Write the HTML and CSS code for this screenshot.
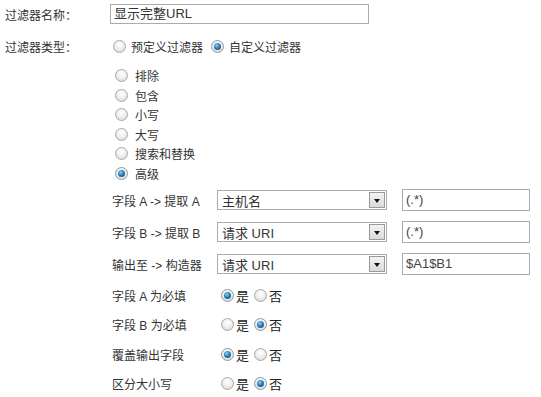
FILE: index.html
```html
<!DOCTYPE html>
<html lang="zh-CN">
<head>
<meta charset="utf-8">
<title>过滤器</title>
<link rel="stylesheet" href="styles.css">
</head>
<body>
<div class="form">
  <div class="row top">
    <div class="lbl">过滤器名称：</div>
    <div class="textbox name">显示完整URL</div>
  </div>
  <div class="row type">
    <div class="lbl">过滤器类型：</div>
    <div class="choices">
      <span class="opt"><span class="radio"></span><span class="t">预定义过滤器</span></span>
      <span class="opt"><span class="radio on"></span><span class="t">自定义过滤器</span></span>
    </div>
  </div>
  <div class="sublist">
    <div class="subopt"><span class="radio"></span><span class="t">排除</span></div>
    <div class="subopt"><span class="radio"></span><span class="t">包含</span></div>
    <div class="subopt"><span class="radio"></span><span class="t">小写</span></div>
    <div class="subopt"><span class="radio"></span><span class="t">大写</span></div>
    <div class="subopt"><span class="radio"></span><span class="t">搜索和替换</span></div>
    <div class="subopt"><span class="radio on"></span><span class="t">高级</span></div>
  </div>
  <div class="fields">
    <div class="frow">
      <div class="flbl">字段 A -&gt; 提取 A</div>
      <div class="select"><span class="sv">主机名</span><span class="btn"><span class="tri"></span></span></div>
      <div class="textbox small">(.*)</div>
    </div>
    <div class="frow">
      <div class="flbl">字段 B -&gt; 提取 B</div>
      <div class="select"><span class="sv">请求 URI</span><span class="btn"><span class="tri"></span></span></div>
      <div class="textbox small">(.*)</div>
    </div>
    <div class="frow">
      <div class="flbl">输出至 -&gt; 构造器</div>
      <div class="select"><span class="sv">请求 URI</span><span class="btn"><span class="tri"></span></span></div>
      <div class="textbox small">$A1$B1</div>
    </div>
  </div>
  <div class="yesno">
    <div class="yrow">
      <div class="flbl">字段 A 为必填</div>
      <span class="yo"><span class="radio on"></span><span class="t">是</span></span>
      <span class="yo"><span class="radio"></span><span class="t">否</span></span>
    </div>
    <div class="yrow">
      <div class="flbl">字段 B 为必填</div>
      <span class="yo"><span class="radio"></span><span class="t">是</span></span>
      <span class="yo"><span class="radio on"></span><span class="t">否</span></span>
    </div>
    <div class="yrow">
      <div class="flbl">覆盖输出字段</div>
      <span class="yo"><span class="radio on"></span><span class="t">是</span></span>
      <span class="yo"><span class="radio"></span><span class="t">否</span></span>
    </div>
    <div class="yrow">
      <div class="flbl">区分大小写</div>
      <span class="yo"><span class="radio"></span><span class="t">是</span></span>
      <span class="yo"><span class="radio on"></span><span class="t">否</span></span>
    </div>
  </div>
</div>
</body>
</html>
```
FILE: styles.css
```css
html, body {
  margin: 0;
  padding: 0;
  background: #ffffff;
}
body {
  font-family: "Liberation Sans", "Noto Sans CJK SC", sans-serif;
  font-size: 12px;
  color: #333333;
}
.form {
  padding: 4px 0 0 5px;
}
.row {
  display: flex;
  align-items: center;
  height: 20px;
}
.row.type {
  margin-top: 12px;
}
.lbl {
  width: 105px;
  flex: none;
}
.textbox {
  box-sizing: border-box;
  height: 20px;
  border: 1px solid #a5acb2;
  background: #fff;
  font-size: 13px;
  line-height: 18px;
  padding-left: 3px;
  color: #333;
  white-space: nowrap;
}
.textbox.name {
  width: 259px;
}
.choices {
  display: flex;
  align-items: center;
  margin-left: 3px;
}
.opt {
  display: flex;
  align-items: center;
  margin-right: 8px;
}
.opt .radio {
  margin-right: 5px;
}
.radio {
  box-sizing: border-box;
  display: inline-block;
  width: 13px;
  height: 13px;
  border-radius: 50%;
  border: 1px solid #a9a9a9;
  background: radial-gradient(circle at 50% 35%, #ffffff 0%, #f2f2f2 40%, #d3d3d3 100%);
  position: relative;
  flex: none;
}
.radio.on {
  border-color: #8c9aa6;
}
.radio.on::after {
  content: "";
  position: absolute;
  left: 2px;
  top: 2px;
  width: 7px;
  height: 7px;
  border-radius: 50%;
  background: radial-gradient(circle at 40% 35%, #8fd3f2 0%, #2c7fb8 45%, #0d3f6e 100%);
}
.sublist {
  margin-top: 10px;
  padding-left: 110px;
}
.subopt {
  display: flex;
  align-items: center;
  height: 19.5px;
}
.subopt .radio {
  margin-right: 7px;
}
.fields {
  margin-top: 6px;
  padding-left: 107px;
  display: flex;
  flex-direction: column;
  gap: 10px;
}
.frow {
  display: flex;
  align-items: center;
  height: 22px;
}
.flbl {
  width: 105px;
  flex: none;
}
.select {
  box-sizing: border-box;
  width: 170px;
  height: 20px;
  border: 1px solid #a5acb2;
  background: #fff;
  display: flex;
  align-items: center;
  justify-content: space-between;
  font-size: 13px;
  color: #333;
}
.sv {
  padding-left: 4px;
}
.btn {
  box-sizing: border-box;
  width: 16px;
  height: 16px;
  margin-right: 1px;
  border: 1px solid #9a9a9a;
  background: linear-gradient(#f4f4f4, #d9d9d9);
  display: flex;
  align-items: center;
  justify-content: center;
}
.tri {
  width: 0;
  height: 0;
  border-left: 3.5px solid transparent;
  border-right: 3.5px solid transparent;
  border-top: 4px solid #111;
  margin-top: 1px;
}
.textbox.small {
  width: 128px;
  height: 22px;
  line-height: 20px;
  margin-left: 15px;
  color: #444;
}
.yesno {
  margin-top: 10px;
  padding-left: 107px;
  display: flex;
  flex-direction: column;
  gap: 9.5px;
}
.yrow {
  display: flex;
  align-items: center;
  height: 20px;
}
.yo {
  display: flex;
  align-items: center;
  font-size: 13px;
  color: #222;
}
.yo .radio {
  margin-right: 2px;
}
.yo + .yo {
  margin-left: 5px;
}
.yrow .flbl {
  width: 109px;
}
```
